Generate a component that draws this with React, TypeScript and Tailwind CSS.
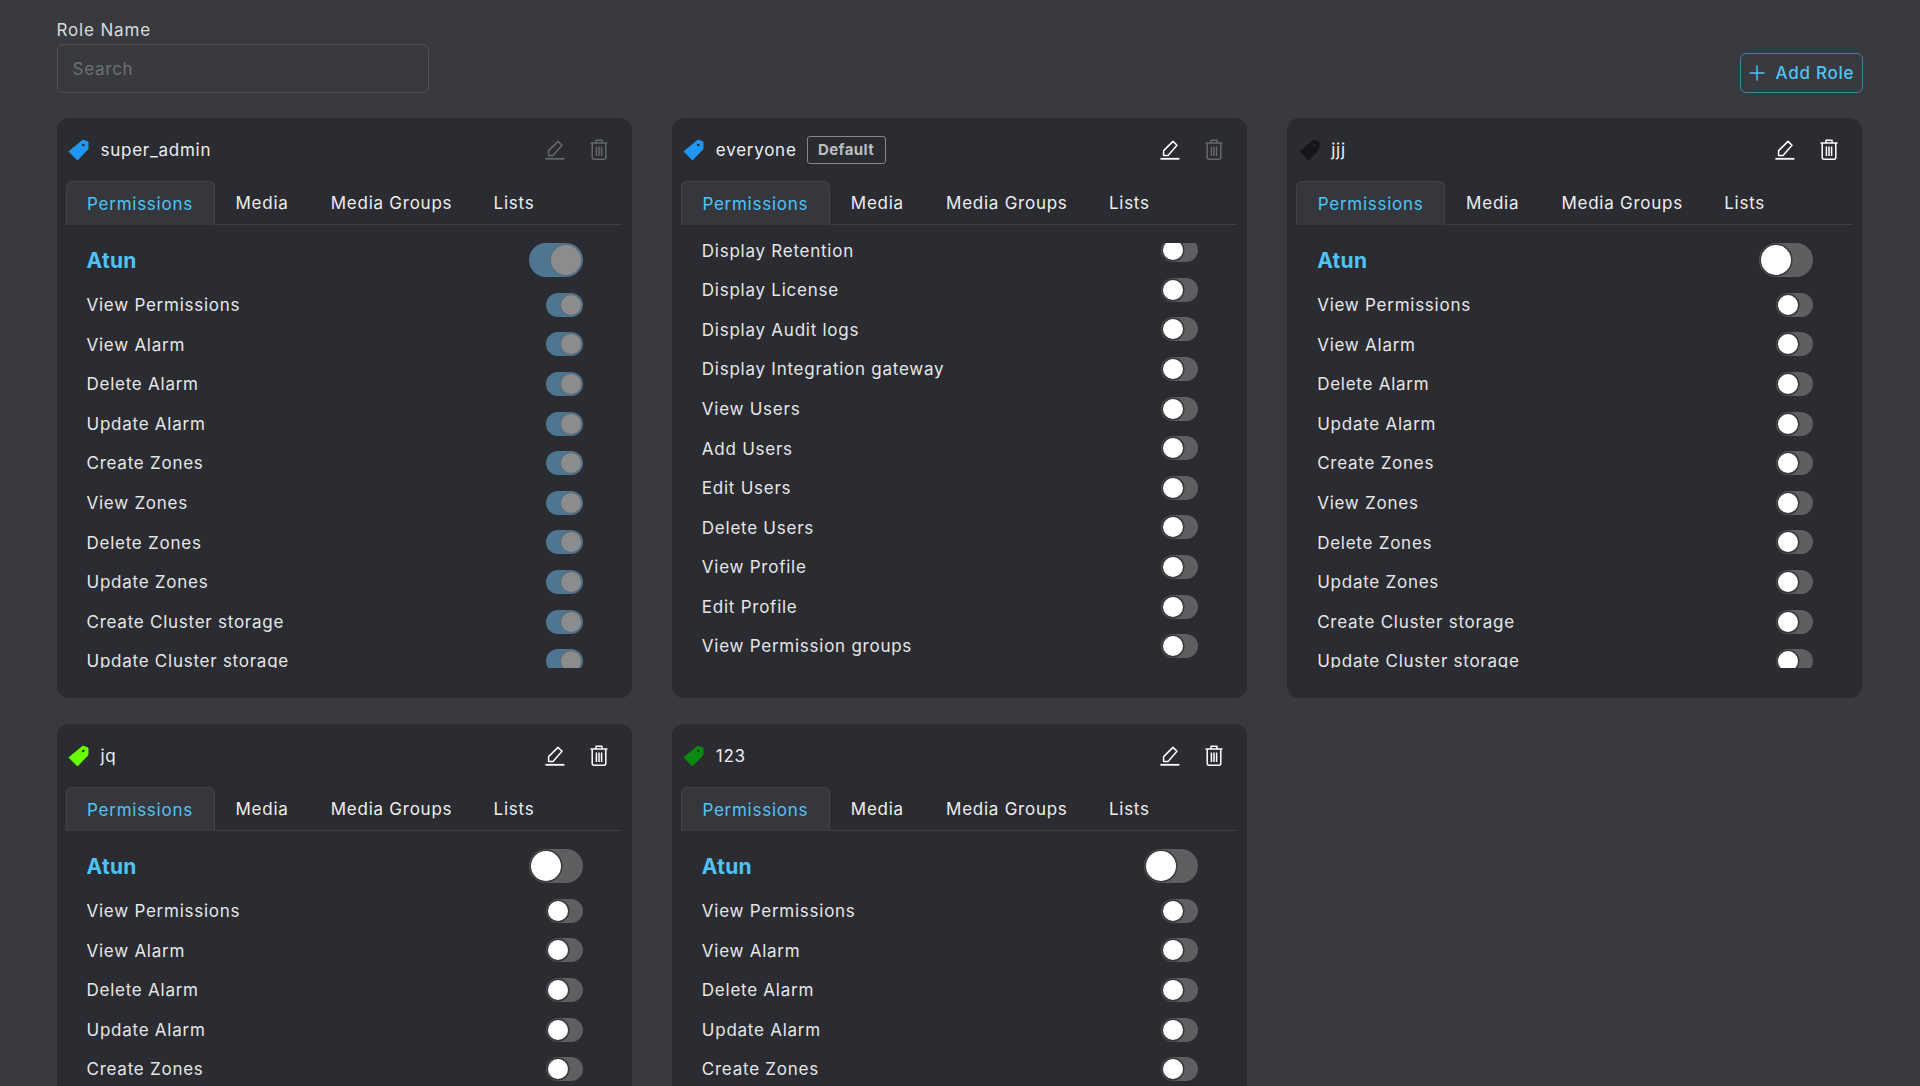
import React from "react";

const atunRows = ["View Permissions","View Alarm","Delete Alarm","Update Alarm","Create Zones","View Zones","Delete Zones","Update Zones","Create Cluster storage","Update Cluster storage","Delete Cluster storage"];
const everyoneRows = ["Display Retention","Display License","Display Audit logs","Display Integration gateway","View Users","Add Users","Edit Users","Delete Users","View Profile","Edit Profile","View Permission groups"];

function Tag({ color }: { color: string }) {
  return (
    <svg width="21" height="22" viewBox="0 0 21 22" className="shrink-0">
      <path d="M15 1 L20 3 L20 10 L9.5 21 L1 12.5 Z" fill={color} stroke={color} strokeWidth="1" strokeLinejoin="round" />
      <circle cx="15.3" cy="6" r="1.3" fill="#2a2c31" />
    </svg>
  );
}

function EditIcon({ color }: { color: string }) {
  return (
    <svg width="20" height="20" viewBox="0 0 20 20" fill="none" stroke={color} strokeWidth="1.5" strokeLinejoin="round" className="shrink-0">
      <path d="M3.6 15.4 L3.6 10.6 L13 1.4 L17 5.2 L8 15.4 Z" />
      <path d="M0.4 18.8 H19.4" strokeWidth="1.8" />
    </svg>
  );
}

function TrashIcon({ color }: { color: string }) {
  return (
    <svg width="18" height="21" viewBox="0 0 18 21" fill="none" stroke={color} strokeWidth="1.5" strokeLinejoin="round" className="shrink-0">
      <path d="M0.5 4 H17.5" />
      <path d="M6 4 V1.2 H12 V4" />
      <path d="M2.2 4 V18.5 Q2.2 20.2 4 20.2 H14 Q15.8 20.2 15.8 18.5 V4" />
      <path d="M6.4 7.5 V17 M9 7.5 V17 M11.6 7.5 V17" />
    </svg>
  );
}

function Switch({ big, on }: { big?: boolean; on?: boolean }) {
  const track = on ? "bg-[#4f7690]" : "bg-[#5e5f61]";
  const thumb = on ? "bg-[#8b8c8d] shadow-[0_0_0_1px_#5a6d7a]" : "bg-white shadow-[0_0_0_1.5px_#38393c]";
  if (big) {
    return (
      <div className={`flex h-[34px] w-[54px] shrink-0 items-center rounded-full px-[2px] ${track} ${on ? "justify-end" : "justify-start"}`}>
        <div className={`h-[30px] w-[30px] rounded-full ${thumb}`} />
      </div>
    );
  }
  return (
    <div className={`flex h-[24px] w-[37px] shrink-0 items-center rounded-full px-[2px] ${track} ${on ? "justify-end" : "justify-start"}`}>
      <div className={`h-[20px] w-[20px] rounded-full ${thumb}`} />
    </div>
  );
}

function Row({ label, on }: { label: string; on?: boolean }) {
  return (
    <div className="flex h-[39.6px] shrink-0 items-center justify-between">
      <span className="pt-[2px] text-[17px] tracking-[0.75px] text-[#e6e6e8]">{label}</span>
      <Switch on={on} />
    </div>
  );
}

type Role = { name: string; color: string; isDefault?: boolean; on?: boolean; editOff?: boolean; trashOff?: boolean; list?: boolean };

function Card({ role }: { role: Role }) {
  return (
    <div className="flex h-[580px] flex-col rounded-[12px] bg-[#2a2c31] px-[10px]">
      <div className="flex h-[63px] shrink-0 items-center pl-[1.5px] pr-[14px]">
        <Tag color={role.color} />
        <span className="ml-[11.5px] pt-[2px] text-[17px] tracking-[0.75px] text-[#eeeeef]">{role.name}</span>
        {role.isDefault && (
          <span className="ml-[10px] flex h-[28px] w-[79px] items-center justify-center rounded-[3px] border border-[#85878b] pt-[1px] text-[15px] font-bold tracking-[0.4px] text-[#bdbec0]">Default</span>
        )}
        <div className="ml-auto flex items-center gap-[25px]">
          <EditIcon color={role.editOff ? "#65676b" : "#ffffff"} />
          <TrashIcon color={role.trashOff ? "#65676b" : "#ffffff"} />
        </div>
      </div>
      <div className="flex h-[44px] shrink-0 border-b border-[#3d3f45] text-[17px] tracking-[0.75px] text-[#eeeeef]">
        <div className="-mb-px -ml-px flex w-[149px] items-center justify-center rounded-t-[6px] border border-b-0 border-[#42444a] bg-[#35373d] pt-[3px] text-[#4fc3f7]">Permissions</div>
        <div className="flex w-[95px] items-center justify-center pt-[3px]">Media</div>
        <div className="flex w-[164px] items-center justify-center pt-[3px]">Media Groups</div>
        <div className="flex w-[81px] items-center justify-center pt-[3px]">Lists</div>
      </div>
      <div className="mt-[18px] h-[425px] shrink-0 overflow-hidden pl-[20px] pr-[39px]">
        {role.list ? (
          <div className="-mt-[12.5px] flex flex-col">
            {everyoneRows.map((r) => <Row key={r} label={r} />)}
          </div>
        ) : (
          <div className="flex flex-col">
            <div className="flex h-[42px] shrink-0 items-start justify-between">
              <span className="flex h-[34px] items-center pt-[2px] text-[21px] font-bold tracking-[0.3px] text-[#4fc3f7]">Atun</span>
              <Switch big on={role.on} />
            </div>
            {atunRows.map((r) => <Row key={r} label={r} on={role.on} />)}
          </div>
        )}
      </div>
    </div>
  );
}

const roles: Role[] = [
  { name: "super_admin", color: "#2196f3", on: true, editOff: true, trashOff: true },
  { name: "everyone", color: "#2196f3", isDefault: true, trashOff: true, list: true },
  { name: "jjj", color: "#15161a" },
  { name: "jq", color: "#66ff00" },
  { name: "123", color: "#0a8a10" },
];

export default function App() {
  return (
    <div className="h-[1086px] overflow-hidden bg-[#383a40] pl-[56.5px] pr-[57.5px] pt-[19px] font-['Inter','Noto_Sans',sans-serif]">
      <div className="flex items-end justify-between">
        <div className="flex w-[372px] flex-col gap-[3px]">
          <label className="text-[17px] leading-[22px] tracking-[0.85px] text-[#d9dadc]">Role Name</label>
          <input
            placeholder="Search"
            className="h-[49px] rounded-[6px] border border-[#505258] bg-transparent px-[15px] text-[17px] tracking-[0.75px] outline-none placeholder:text-[#6f7175]"
          />
        </div>
        <button className="flex h-[40px] w-[123px] items-center rounded-[6px] border border-[#3c86a8] pl-[8px] text-[17px] font-medium tracking-[0.75px] text-[#4fc3f7]">
          <svg width="16" height="16" viewBox="0 0 16 16" fill="none" stroke="#4fc3f7" strokeWidth="1.5"><path d="M8 .5V15.5M.5 8H15.5" /></svg>
          <span className="ml-[11px] whitespace-nowrap pt-[2px]">Add Role</span>
        </button>
      </div>
      <div className="mt-[25px] grid grid-cols-3 gap-x-[40px] gap-y-[26px]">
        {roles.map((r) => <Card key={r.name} role={r} />)}
      </div>
    </div>
  );
}
